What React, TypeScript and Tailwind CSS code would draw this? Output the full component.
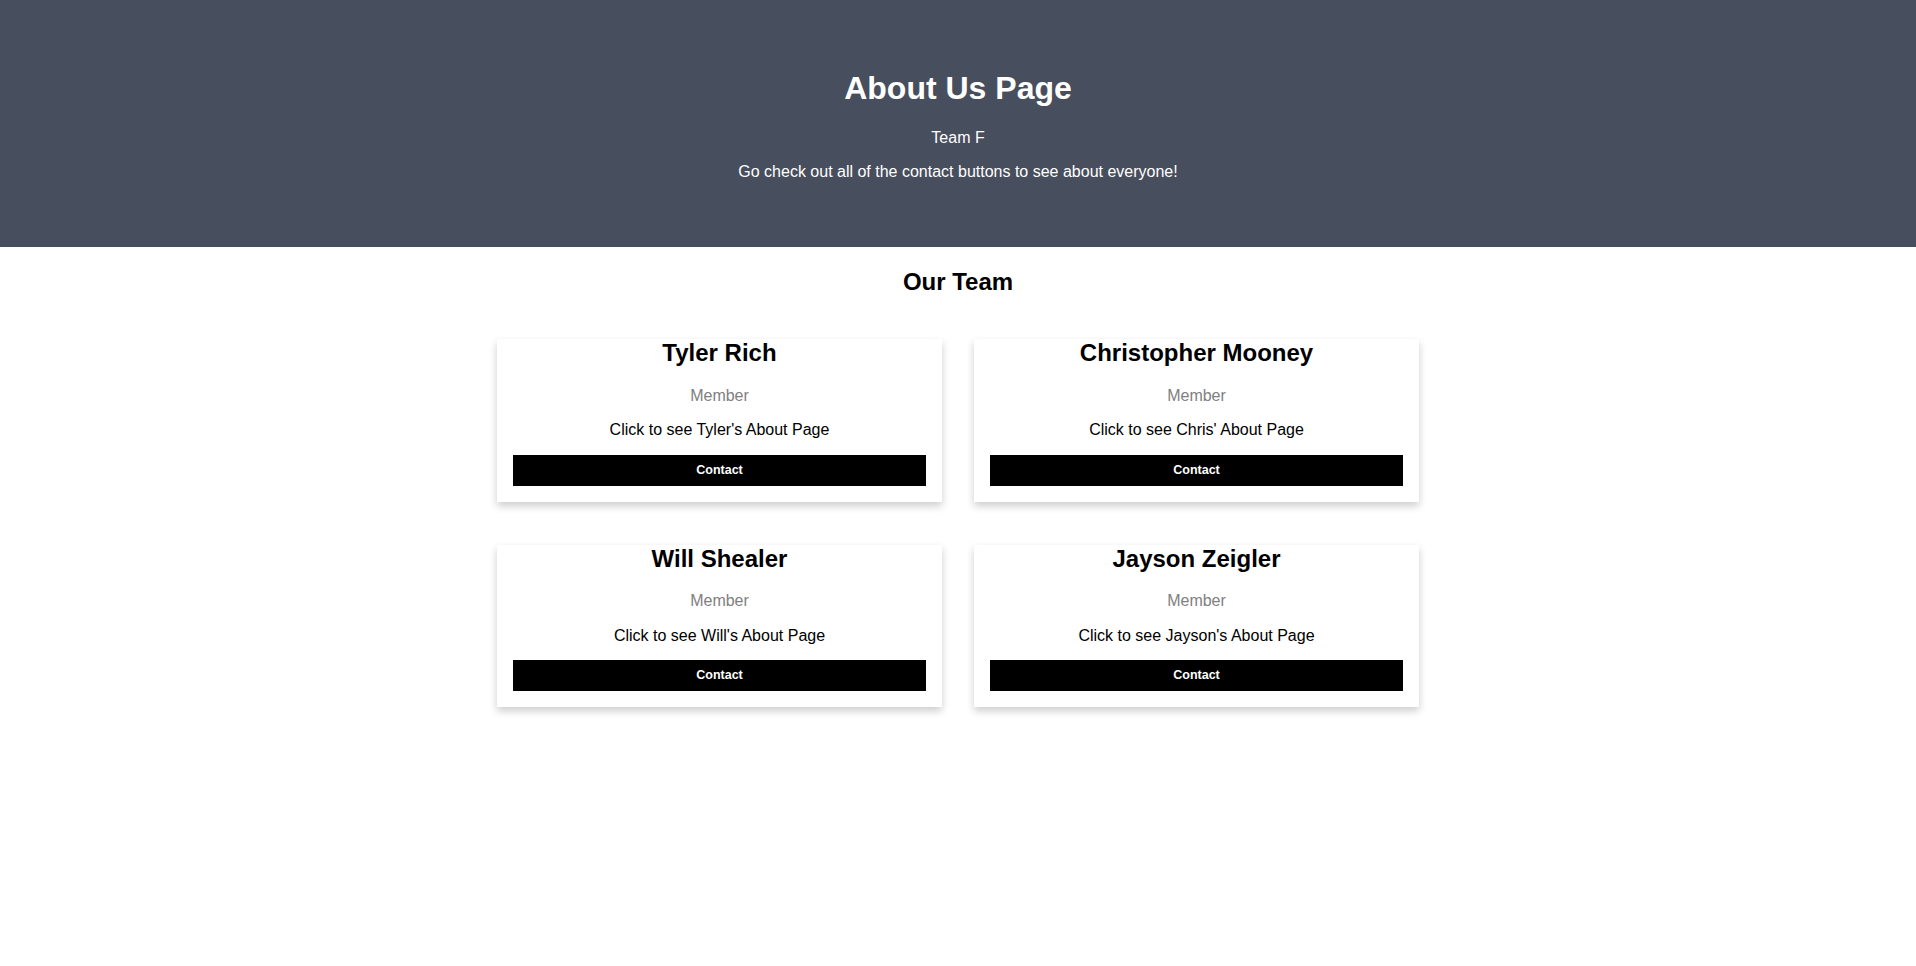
import React from "react";

const members = [
  { name: "Tyler Rich", text: "Click to see Tyler's About Page" },
  { name: "Christopher Mooney", text: "Click to see Chris' About Page" },
  { name: "Will Shealer", text: "Click to see Will's About Page" },
  { name: "Jayson Zeigler", text: "Click to see Jayson's About Page" },
];

export default function App() {
  return (
    <div className="min-h-[966px] bg-white text-black" style={{ fontFamily: '"Liberation Sans", Arial, sans-serif' }}>
      <div className="bg-[#474e5d] text-white text-center h-[247px] pt-[70px]">
        <h1 className="text-[32px] font-bold leading-[36.8px]">About Us Page</h1>
        <p className="mt-[22px] text-[16px] leading-[18.4px]">Team F</p>
        <p className="mt-[16px] text-[16px] leading-[18.4px]">Go check out all of the contact buttons to see about everyone!</p>
      </div>
      <h2 className="mt-[20.5px] text-center text-[24px] font-bold leading-[27.6px]">Our Team</h2>
      <div className="mt-[44px] mx-auto w-[922px] grid grid-cols-2 gap-x-[32px] gap-y-[42.5px]">
        {members.map((m) => (
          <div key={m.name} className="bg-white shadow-[0_4px_8px_0_rgba(0,0,0,0.2)] px-4 pb-4 text-center">
            <h2 className="text-[24px] font-bold leading-[27.6px]">{m.name}</h2>
            <p className="mt-[20px] text-[16px] leading-[18.4px] text-[#808080]">Member</p>
            <p className="mt-[16px] text-[16px] leading-[18.4px]">{m.text}</p>
            <button className="mt-[15.5px] w-full bg-black text-white text-[12.5px] font-bold leading-[15px] py-2 h-[31px]">
              Contact
            </button>
          </div>
        ))}
      </div>
    </div>
  );
}
